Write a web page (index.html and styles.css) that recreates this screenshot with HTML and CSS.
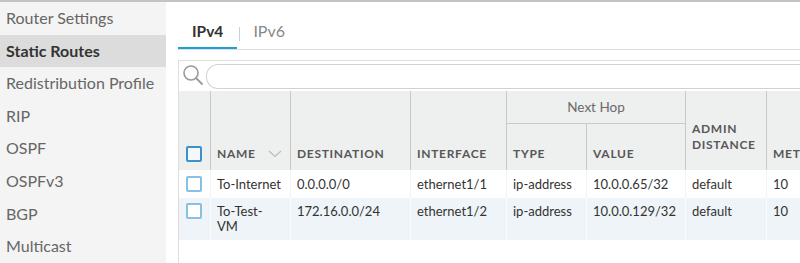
FILE: index.html
```html
<!DOCTYPE html>
<html>
<head>
<meta charset="utf-8">
<link rel="stylesheet" href="styles.css">
</head>
<body>
<div class="app">
  <nav class="sidebar">
    <div class="nav-item">Router Settings</div>
    <div class="nav-item active">Static Routes</div>
    <div class="nav-item">Redistribution Profile</div>
    <div class="nav-item">RIP</div>
    <div class="nav-item">OSPF</div>
    <div class="nav-item">OSPFv3</div>
    <div class="nav-item">BGP</div>
    <div class="nav-item">Multicast</div>
  </nav>
  <main class="main">
    <div class="tabs">
      <div class="tab active">IPv4</div>
      <span class="tab-sep"></span>
      <div class="tab">IPv6</div>
    </div>
    <div class="panel">
      <div class="search">
        <svg class="search-icon" width="22" height="22" viewBox="0 0 22 22">
          <circle cx="9" cy="9" r="7" fill="none" stroke="#9a9a9a" stroke-width="1.6"/>
          <line x1="14" y1="14" x2="20" y2="20" stroke="#9a9a9a" stroke-width="1.8" stroke-linecap="round"/>
        </svg>
        <div class="search-input"></div>
      </div>
      <div class="grid">
        <div class="head">
          <div class="hc c-chk"><span class="checkbox hdr"></span></div>
          <div class="hc c-name"><span>NAME</span>
            <svg class="sort" width="14" height="8" viewBox="0 0 14 8"><polyline points="1,1 7,6.5 13,1" fill="none" stroke="#bcbcbc" stroke-width="1.2"/></svg>
          </div>
          <div class="hc c-dest">DESTINATION</div>
          <div class="hc c-iface">INTERFACE</div>
          <div class="hc c-hop">Next Hop</div>
          <div class="hc c-type">TYPE</div>
          <div class="hc c-value">VALUE</div>
          <div class="hc c-admin">ADMIN<br>DISTANCE</div>
          <div class="hc c-metric">METRIC</div>
        </div>
        <div class="row">
          <div class="dc"><span class="checkbox"></span></div>
          <div class="dc">To-Internet</div>
          <div class="dc">0.0.0.0/0</div>
          <div class="dc">ethernet1/1</div>
          <div class="dc">ip-address</div>
          <div class="dc">10.0.0.65/32</div>
          <div class="dc">default</div>
          <div class="dc">10</div>
        </div>
        <div class="row alt">
          <div class="dc"><span class="checkbox"></span></div>
          <div class="dc">To-Test-<br>VM</div>
          <div class="dc">172.16.0.0/24</div>
          <div class="dc">ethernet1/2</div>
          <div class="dc">ip-address</div>
          <div class="dc">10.0.0.129/32</div>
          <div class="dc">default</div>
          <div class="dc">10</div>
        </div>
      </div>
    </div>
  </main>
</div>
</body>
</html>
```

FILE: styles.css
```css
html, body {
  margin: 0;
  padding: 0;
  width: 800px;
  height: 263px;
  overflow: hidden;
  background: #fff;
  font-family: Lato, "Open Sans", sans-serif;
}
.app {
  display: flex;
  height: 263px;
  border-top: 2px solid #c4c4c4;
  box-sizing: border-box;
}
.sidebar {
  width: 166px;
  flex: none;
  background: #f4f4f4;
}
.nav-item {
  height: 32.6px;
  line-height: 32.6px;
  padding-left: 6px;
  font-size: 16px;
  color: #666;
  white-space: nowrap;
}
.nav-item.active {
  background: #dcdcdc;
  color: #333;
  font-weight: 700;
}
.main {
  flex: 1;
  min-width: 0;
  padding-left: 12px;
  overflow: hidden;
}
.tabs {
  display: flex;
  height: 47px;
  border-bottom: 1px solid #dedede;
}
.tab {
  box-sizing: border-box;
  height: 47px;
  padding: 19px 14px 0;
  line-height: 20px;
  font-size: 15.5px;
  color: #888;
}
.tab.active {
  font-weight: 700;
  color: #333;
  border-bottom: 2px solid #1ba0dc;
}
.tab-sep {
  width: 1px;
  height: 14px;
  margin: 25px 0 0 2px;
  background: #cfcfcf;
}
.tab-sep + .tab {
  padding-left: 13px;
  font-size: 16px;
}
.panel {
  margin-top: 10px;
  border-top: 1px solid #dedede;
  border-left: 1px solid #dedede;
  height: 300px;
}
.search {
  display: flex;
  height: 30px;
}
.search-icon {
  margin: 3px 0 0 3px;
  flex: none;
}
.search-input {
  flex: 1;
  margin: 3px 0 0 2px;
  height: 25px;
  box-sizing: border-box;
  border: 1px solid #d2d2d2;
  border-right: none;
  border-radius: 12px 0 0 12px;
}
.grid {
  width: 700px;
}
.head,
.row {
  display: grid;
  grid-template-columns: 31px 80px 120px 96px 80px 99px 81px 113px;
}
.head {
  grid-template-rows: 33px 46px;
  background: #eeefef;
  color: #585858;
}
.hc {
  box-sizing: border-box;
  border-left: 1px solid #c9c9c9;
  padding: 0 6px 8px;
  font-size: 12px;
  font-weight: 700;
  letter-spacing: 0.7px;
  line-height: 16px;
  display: flex;
  align-items: flex-end;
  white-space: nowrap;
}
.hc.c-admin {
  display: block;
  padding-top: 30px;
}
.c-chk { grid-row: 1 / 3; grid-column: 1; border-left: none; padding-left: 7px; }
.c-name { grid-row: 1 / 3; grid-column: 2; }
.c-dest { grid-row: 1 / 3; grid-column: 3; }
.c-iface { grid-row: 1 / 3; grid-column: 4; }
.c-hop {
  grid-row: 1;
  grid-column: 5 / 7;
  border-bottom: 1px solid #c9c9c9;
  justify-content: center;
  align-items: center;
  padding: 0;
  font-weight: 400;
  font-size: 13.5px;
  letter-spacing: 0;
  color: #6a6a6a;
}
.c-type { grid-row: 2; grid-column: 5; }
.c-value { grid-row: 2; grid-column: 6; }
.c-admin { grid-row: 1 / 3; grid-column: 7; }
.c-metric { grid-row: 1 / 3; grid-column: 8; }
.sort {
  margin-left: auto;
  margin-right: 2px;
  margin-bottom: 4px;
}
.row {
  border-top: 1px solid #fff;
  color: #333;
  font-size: 13px;
  line-height: 15px;
}
.row.alt {
  background: #eef4f7;
  border-top: none;
}
.dc {
  padding: 6px 6px;
  border-left: 1px solid #f3f3f3;
  white-space: nowrap;
}
.row.alt .dc {
  border-left-color: #fafcfd;
}
.dc:first-child {
  border-left: none;
  padding: 5px 0 0 7px;
}
.checkbox {
  display: block;
  width: 16px;
  height: 16px;
  box-sizing: border-box;
  border: 2px solid #86c0e2;
  border-radius: 2px;
  background: #fff;
}
.checkbox.hdr {
  border-color: #3a92c8;
  background: #f4f8fb;
}
```
